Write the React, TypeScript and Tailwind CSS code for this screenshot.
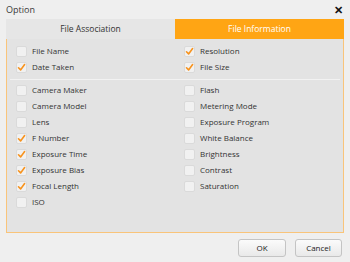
import React from 'react';

type Item = { label: string; checked: boolean };

const topLeft: Item[] = [
  { label: 'File Name', checked: false },
  { label: 'Date Taken', checked: true },
];
const topRight: Item[] = [
  { label: 'Resolution', checked: true },
  { label: 'File Size', checked: true },
];
const left: Item[] = [
  { label: 'Camera Maker', checked: false },
  { label: 'Camera Model', checked: false },
  { label: 'Lens', checked: false },
  { label: 'F Number', checked: true },
  { label: 'Exposure Time', checked: true },
  { label: 'Exposure Bias', checked: true },
  { label: 'Focal Length', checked: true },
  { label: 'ISO', checked: false },
];
const right: Item[] = [
  { label: 'Flash', checked: false },
  { label: 'Metering Mode', checked: false },
  { label: 'Exposure Program', checked: false },
  { label: 'White Balance', checked: false },
  { label: 'Brightness', checked: false },
  { label: 'Contrast', checked: false },
  { label: 'Saturation', checked: false },
];

const Check: React.FC<Item> = ({ label, checked }) => (
  <div className="flex items-center h-4 pl-[9px]">
    <span className="w-[11px] h-[11px] rounded-[2px] border border-[#dadada] bg-[#f1f1f1] flex items-center justify-center">
      {checked && (
        <svg width="9" height="9" viewBox="0 0 9 9">
          <path d="M1.5 4.8 L3.6 6.9 L7.6 1.6" fill="none" stroke="#f7931e" strokeWidth="1.6" strokeLinecap="round" strokeLinejoin="round" />
        </svg>
      )}
    </span>
    <span className="ml-[5px] text-[#333]">{label}</span>
  </div>
);

const Column: React.FC<{ items: Item[] }> = ({ items }) => (
  <div className="flex flex-col">
    {items.map((it) => (
      <Check key={it.label} {...it} />
    ))}
  </div>
);

export default function App() {
  return (
    <div
      className="w-[350px] h-[262px] bg-[#efefef] relative text-[8px] leading-none"
      style={{ fontFamily: '"Open Sans", "Noto Sans", sans-serif' }}
    >
      {/* 타이틀 */}
      <div className="h-[19px] flex items-center justify-between pl-[6px] pr-[7px]">
        <span className="text-[#3a3a3a] text-[9px]">Option</span>
        <span className="text-[#111] text-[11px] font-bold leading-none">✕</span>
      </div>

      {/* 탭 + 패널 */}
      <div className="mx-[6px] w-[338px]">
        <div className="flex h-[20px]">
          <div className="flex-1 bg-[#e6e6e6] flex items-center justify-center text-[#333] text-[8.5px]">
            File Association
          </div>
          <div className="flex-1 bg-[#ffa514] flex items-center justify-center text-white text-[8.5px]">
            File Information
          </div>
        </div>
        <div className="h-[194px] bg-[#e3e3e3] border border-t-0 border-[#f9c47a]">
          <div className="grid grid-cols-2 pt-[4px]">
            <Column items={topLeft} />
            <Column items={topRight} />
          </div>
          <div className="mx-[3px] mt-[4px] mb-[2px] h-px bg-[#f2f2f2]" />
          <div className="grid grid-cols-2">
            <Column items={left} />
            <Column items={right} />
          </div>
        </div>
      </div>

      {/* 버튼 */}
      <div className="flex justify-end gap-[9px] pr-[8px] mt-[6px]">
        <button className="w-[48px] h-[18px] rounded-[3px] border border-[#c4c4c4] bg-gradient-to-b from-[#fbfbfb] to-[#e9e9e9] text-[#222] text-[8px]">
          OK
        </button>
        <button className="w-[47px] h-[18px] rounded-[3px] border border-[#c4c4c4] bg-gradient-to-b from-[#fbfbfb] to-[#e9e9e9] text-[#222] text-[8px]">
          Cancel
        </button>
      </div>
    </div>
  );
}
